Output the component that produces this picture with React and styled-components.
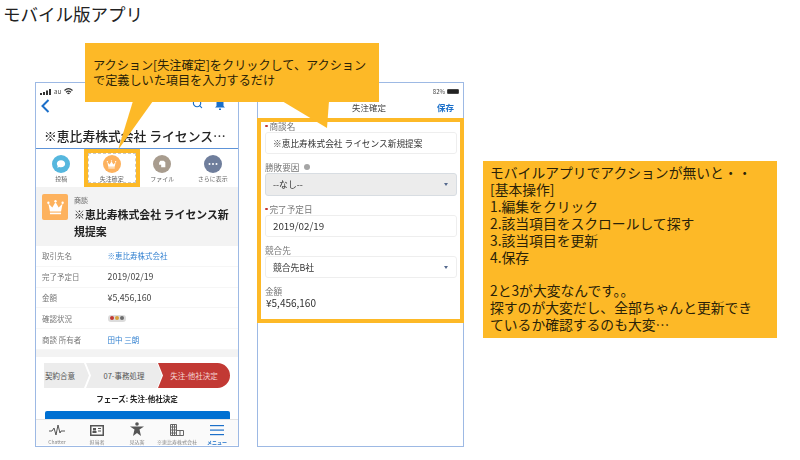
import React from "react";
import styled, { createGlobalStyle } from "styled-components";
import { Search } from "lucide-react";

const rows = [
  { label: "取引先名", value: "※恵比寿株式会社", link: true },
  { label: "完了予定日", value: "2019/02/19", num: true },
  { label: "金額", value: "¥5,456,160", num: true },
  { label: "確認状況", lights: true },
  { label: "商談 所有者", value: "田中 三朗", link: true },
];

const Crown = ({ size }) => (
  <svg width={size} height={size} viewBox="0 0 24 24" fill="#fff">
    <path d="M3 7l5 5 4-7 4 7 5-5-2 10H5z" />
    <circle cx="3" cy="6" r="1.5" />
    <circle cx="12" cy="4" r="1.5" />
    <circle cx="21" cy="6" r="1.5" />
    <rect x="5" y="18.5" width="14" height="2" />
  </svg>
);

const App = () => {
  return (
    <Page>
      <GlobalStyle />
      <Title>モバイル版アプリ</Title>
      <Stage>
        <Phone>
          <StatusBar>
            <svg width="11" height="6" viewBox="0 0 11 6" fill="#333">
              <rect x="0" y="4" width="2" height="2" />
              <rect x="3" y="3" width="2" height="3" />
              <rect x="6" y="1.5" width="2" height="4.5" />
              <rect x="9" y="0" width="2" height="6" />
            </svg>
            <span>au</span>
            <svg width="9" height="7" viewBox="0 0 18 14" fill="none" stroke="#333" strokeWidth="2.4">
              <path d="M1 5c5-4.500 11-4.500 16 0M4 8.500c3-2.500 7-2.500 10 0M7 11.500c1-1 3-1 4 0" />
            </svg>
          </StatusBar>
          <NavBar>
            <svg width="9" height="14" viewBox="0 0 9 14" fill="none" stroke="#1b6fc9" strokeWidth="2">
              <path d="M7.500 1L1.500 7l6 6" />
            </svg>
            <NavIcons>
              <Search size={11} color="#1b6fc9" strokeWidth={2.5} />
              <svg width="12" height="12" viewBox="0 0 12 12" fill="#1b6fc9">
                <path d="M2.500 8V4.500a3.500 3.500 0 0 1 7 0V8l1.500 1.500H1zM5 10.500h2V12H5z" />
              </svg>
            </NavIcons>
          </NavBar>
          <RecordTitle>※恵比寿株式会社 ライセンス…</RecordTitle>
          <Actions>
            <Action>
              <ActionCircle $color="#56b7de">
                <svg width="10" height="10" viewBox="0 0 12 12" fill="#fff">
                  <path d="M6 1.500c3 0 5 1.900 5 4.300S9 10 6 10c-.8 0-1.500-.1-2.200-.4L1.500 10.500l.6-2.100C1.400 7.700 1 6.800 1 5.800 1 3.400 3 1.500 6 1.500z" />
                </svg>
              </ActionCircle>
              <ActionLabel>投稿</ActionLabel>
            </Action>
            <Action $highlight>
              <ActionCircle $color="#fdb25e">
                <Crown size={11} />
              </ActionCircle>
              <ActionLabel>失注確定</ActionLabel>
            </Action>
            <Action>
              <ActionCircle $color="#a89c8e">
                <svg width="10" height="10" viewBox="0 0 12 12" fill="#fff">
                  <path d="M4 2h4l2 2v6H5V7H2.500V4.500z" />
                </svg>
              </ActionCircle>
              <ActionLabel>ファイル</ActionLabel>
            </Action>
            <Action>
              <ActionCircle $color="#6f7e9c">
                <svg width="10" height="4" viewBox="0 0 10 4" fill="#fff">
                  <circle cx="1.500" cy="2" r="1" />
                  <circle cx="5" cy="2" r="1" />
                  <circle cx="8.500" cy="2" r="1" />
                </svg>
              </ActionCircle>
              <ActionLabel>さらに表示</ActionLabel>
            </Action>
          </Actions>
          <RecordHead>
            <RecordIcon>
              <Crown size={19} />
            </RecordIcon>
            <RecordHeadText>
              <RecordType>商談</RecordType>
              <RecordName>※恵比寿株式会社 ライセンス新規提案</RecordName>
            </RecordHeadText>
          </RecordHead>
          <DetailList>
            {rows.map((row) => (
              <DetailRow key={row.label}>
                <DetailLabel>{row.label}</DetailLabel>
                {row.lights ? (
                  <Lights>
                    <Light $color="#c23934" />
                    <Light $color="#d8a13c" />
                    <Light $color="#6c6c6c" />
                  </Lights>
                ) : (
                  <DetailValue $link={row.link} $num={row.num}>
                    {row.value}
                  </DetailValue>
                )}
              </DetailRow>
            ))}
          </DetailList>
          <Band />
          <PathRow>
            <PathStepFirst>契約合意</PathStepFirst>
            <PathStepMiddle>07-事務処理</PathStepMiddle>
            <PathStepLast>失注-他社決定</PathStepLast>
          </PathRow>
          <Phase>フェーズ: 失注-他社決定</Phase>
          <BlueButton />
          <TabBar>
            <Tab>
              <svg width="16" height="12" viewBox="0 0 16 12" fill="none" stroke="#555" strokeWidth="1">
                <path d="M0 7h3l2-3 2 7 2-10 2 8 1-2h4" />
              </svg>
              <TabLabel>Chatter</TabLabel>
            </Tab>
            <Tab>
              <svg width="14" height="11" viewBox="0 0 14 11" fill="#555">
                <path d="M0 0h14v11H0zM1.500 1.500v8h11v-8z" fillRule="evenodd" />
                <rect x="3" y="3" width="3" height="2.500" />
                <rect x="2.500" y="6" width="4" height="2" />
                <rect x="8" y="3" width="3" height="1" />
                <rect x="8" y="5.500" width="3" height="1" />
              </svg>
              <TabLabel>担当者</TabLabel>
            </Tab>
            <Tab>
              <svg width="14" height="14" viewBox="0 0 14 14" fill="#555">
                <circle cx="7" cy="2" r="1.800" />
                <path d="M0 4.500h14l-4.500 3 1.500 6.500-4-3-4 3 1.500-6.500z" />
              </svg>
              <TabLabel>見込客</TabLabel>
            </Tab>
            <Tab>
              <svg width="14" height="12" viewBox="0 0 14 12" fill="none" stroke="#666" strokeWidth="1">
                <path d="M.5.500h6v11h-6zM6.500 6.500h7v5h-7zM2.500.500v11M4.500.500v11M.5 3h6M.5 6h6M.5 9h6M10 6.500v5" />
              </svg>
              <TabLabel>※恵比寿株式会社</TabLabel>
            </Tab>
            <Tab>
              <svg width="14" height="11" viewBox="0 0 14 11" fill="#1b6fc9">
                <rect y="0" width="14" height="1.200" />
                <rect y="4.500" width="14" height="1.200" />
                <rect y="9" width="14" height="1.200" />
              </svg>
              <TabLabel $active>メニュー</TabLabel>
            </Tab>
          </TabBar>
        </Phone>

        <FormPhone>
          <StatusBarRight>
            <span>82%</span>
            <Battery />
          </StatusBarRight>
          <FormNav>
            <FormNavTitle>失注確定</FormNavTitle>
            <SaveLink>保存</SaveLink>
          </FormNav>
          <FormFrame>
            <Field>
              <FieldLabel $required>商談名</FieldLabel>
              <TextInput>※恵比寿株式会社 ライセンス新規提案</TextInput>
            </Field>
            <Field>
              <FieldLabel>
                勝敗要因 <InfoDot />
              </FieldLabel>
              <SelectBox $disabled>
                --なし--
                <Caret />
              </SelectBox>
            </Field>
            <Field>
              <FieldLabel $required>完了予定日</FieldLabel>
              <TextInput $num>2019/02/19</TextInput>
            </Field>
            <Field>
              <FieldLabel>競合先</FieldLabel>
              <SelectBox>
                競合先B社
                <Caret />
              </SelectBox>
            </Field>
            <Field>
              <FieldLabel>金額</FieldLabel>
              <Amount>¥5,456,160</Amount>
            </Field>
          </FormFrame>
        </FormPhone>

        <NotePanel>
          モバイルアプリでアクションが無いと・・
          <br />
          [基本操作]
          <br />
          1.編集をクリック
          <br />
          2.該当項目をスクロールして探す
          <br />
          3.該当項目を更新
          <br />
          4.保存
          <br />
          <br />
          2と3が大変なんです。。
          <br />
          探すのが大変だし、全部ちゃんと更新でき
          <br />
          ているか確認するのも大変…
        </NotePanel>
      </Stage>

      <Callout>
        <CalloutTails width="294" height="108" viewBox="0 0 294 108">
          <path d="M48 58L33 107L68 58z" fill="#fdb927" />
          <path d="M197 58L242 85L244 58z" fill="#fdb927" />
        </CalloutTails>
        <CalloutText>
          アクション[失注確定]をクリックして、アクション
          <br />
          で定義しいた項目を入力するだけ
        </CalloutText>
      </Callout>
    </Page>
  );
};

export default App;

const GlobalStyle = createGlobalStyle`
body {
  margin: 0;
  background: white;
  font-family: "Noto Sans CJK JP", "Noto Sans", sans-serif;
}
`;
const Page = styled.div`
position: relative;
width: 800px;
height: 460px;
overflow: hidden;
background: white;
color: #222;
`;
const Title = styled.div`
height: 82px;
padding: 1px 0 0 3px;
box-sizing: border-box;
font-size: 17.5px;
line-height: 26px;
color: #222;
`;
const Stage = styled.div`
display: flex;
align-items: flex-start;
padding-left: 35px;
`;
const Phone = styled.div`
width: 204px;
height: 365px;
box-sizing: border-box;
border: 1px solid #9db9e4;
display: flex;
flex-direction: column;
overflow: hidden;
filter: blur(0.3px);
`;
const StatusBar = styled.div`
height: 17px;
flex: none;
display: flex;
align-items: center;
gap: 3px;
padding-left: 4px;
font-size: 6px;
color: #444;
`;
const NavBar = styled.div`
height: 12px;
flex: none;
display: flex;
align-items: center;
justify-content: space-between;
padding: 0 12px 0 5px;
`;
const NavIcons = styled.div`
display: flex;
align-items: center;
gap: 11px;
margin-bottom: 5px;
`;
const RecordTitle = styled.div`
height: 37px;
flex: none;
box-sizing: border-box;
padding: 12px 0 0 8px;
border-bottom: 1px solid #5d93d8;
font-size: 12.800px;
line-height: 24px;
font-weight: 500;
color: #222;
white-space: nowrap;
`;
const Actions = styled.div`
height: 38px;
flex: none;
display: grid;
grid-template-columns: repeat(4, 1fr);
`;
const Action = styled.div`
position: relative;
display: flex;
flex-direction: column;
align-items: center;
padding-top: 6px;
gap: 1px;
${(p) =>
  p.$highlight &&
  `
  margin: 0 -3px;
  box-shadow: inset 0 0 0 4px #fdb927;
  &::after {
    content: "";
    position: absolute;
    inset: 4px;
    border: 1px dashed #c8c8c8;
  }
`}
`;
const ActionCircle = styled.div`
width: 18px;
height: 18px;
border-radius: 50%;
flex: none;
display: flex;
align-items: center;
justify-content: center;
background: ${(p) => p.$color};
`;
const ActionLabel = styled.div`
font-size: 6px;
line-height: 10px;
color: #666;
white-space: nowrap;
`;
const RecordHead = styled.div`
height: 59px;
flex: none;
box-sizing: border-box;
background: #f3f3f3;
display: flex;
gap: 6px;
padding: 7px 6px 0 6px;
`;
const RecordIcon = styled.div`
width: 26px;
height: 26px;
flex: none;
border-radius: 2px;
background: #fdb25e;
display: flex;
align-items: center;
justify-content: center;
`;
const RecordHeadText = styled.div`
display: flex;
flex-direction: column;
`;
const RecordType = styled.div`
font-size: 7px;
line-height: 12px;
color: #666;
`;
const RecordName = styled.div`
font-size: 10.900px;
line-height: 17px;
font-weight: 700;
color: #222;
`;
const DetailList = styled.div`
height: 104px;
flex: none;
display: grid;
grid-auto-rows: 1fr;
`;
const DetailRow = styled.div`
display: flex;
align-items: center;
padding-left: 6px;
border-bottom: 1px solid #f6f6f6;
`;
const DetailLabel = styled.div`
width: 65.500px;
font-size: 7.500px;
color: #777;
`;
const DetailValue = styled.div`
font-size: ${(p) => (p.$num ? "8.800px" : "7.500px")};
color: ${(p) => (p.$link ? "#2f7fd0" : "#444")};
`;
const Lights = styled.div`
display: flex;
gap: 1px;
padding: 1.500px 2px;
border-radius: 3px;
background: #dcdcdc;
`;
const Light = styled.div`
width: 4px;
height: 4px;
border-radius: 50%;
background: ${(p) => p.$color};
`;
const Band = styled.div`
height: 7px;
flex: none;
background: #f3f3f3;
`;
const PathRow = styled.div`
height: 25px;
flex: none;
display: flex;
margin: 6px 0 0 8px;
`;
const PathStep = styled.div`
display: flex;
align-items: center;
justify-content: center;
flex: none;
font-size: 7.500px;
color: #555;
background: #ececec;
white-space: nowrap;
`;
const PathStepFirst = styled(PathStep)`
width: 45px;
justify-content: flex-start;
padding-left: 1px;
box-sizing: border-box;
clip-path: polygon(0 0, 40px 0, 45px 50%, 40px 100%, 0 100%);
`;
const PathStepMiddle = styled(PathStep)`
width: 76px;
margin-left: -3px;
clip-path: polygon(0 0, 71px 0, 76px 50%, 71px 100%, 0 100%, 5px 50%);
`;
const PathStepLast = styled(PathStep)`
width: 72px;
margin-left: -4px;
color: #f4d4d2;
background: #c23934;
clip-path: path("M0 0H59.500A12.500 12.500 0 0 1 59.500 25H0L5 12.500Z");
`;
const Phase = styled.div`
height: 23px;
flex: none;
text-align: center;
font-size: 7.500px;
line-height: 22px;
font-weight: 700;
color: #222;
`;
const BlueButton = styled.div`
height: 8px;
flex: none;
margin: 0 8px 0 9px;
border-radius: 2px 2px 0 0;
background: #0070d2;
`;
const TabBar = styled.div`
height: 26px;
flex: none;
box-sizing: border-box;
display: grid;
grid-template-columns: repeat(5, 1fr);
border-top: 1px solid #e4e4e4;
background: #fafafa;
padding: 0 1px;
`;
const Tab = styled.div`
display: flex;
flex-direction: column;
align-items: center;
justify-content: flex-end;
gap: 2px;
`;
const TabLabel = styled.div`
font-size: 5px;
line-height: 7px;
white-space: nowrap;
color: ${(p) => (p.$active ? "#1b6fc9" : "#888")};
font-weight: ${(p) => (p.$active ? 700 : 400)};
`;
const FormPhone = styled.div`
width: 207px;
height: 365px;
margin-left: 18px;
box-sizing: border-box;
border: 1px solid #9db9e4;
display: flex;
flex-direction: column;
filter: blur(0.3px);
`;
const StatusBarRight = styled.div`
height: 17px;
flex: none;
display: flex;
align-items: center;
justify-content: flex-end;
gap: 2px;
padding-right: 4px;
font-size: 6px;
color: #444;
`;
const Battery = styled.div`
width: 12px;
height: 5px;
box-sizing: border-box;
border: 1px solid #444;
border-radius: 1px;
background: #222;
`;
const FormNav = styled.div`
position: relative;
height: 18px;
flex: none;
box-sizing: border-box;
padding-bottom: 4px;
display: flex;
align-items: center;
justify-content: flex-end;
`;
const FormNavTitle = styled.div`
position: absolute;
left: 17px;
right: 0;
text-align: center;
font-size: 8.500px;
color: #444;
`;
const SaveLink = styled.div`
padding-right: 9px;
font-size: 8.500px;
font-weight: 700;
color: #1b6fc9;
`;
const FormFrame = styled.div`
height: 205px;
flex: none;
box-sizing: border-box;
margin: 0 -1px;
border: 4px solid #fdb927;
padding: 0 3px 0 4px;
display: flex;
flex-direction: column;
gap: 9px;
`;
const Field = styled.div`
display: flex;
flex-direction: column;
gap: 2px;
`;
const FieldLabel = styled.div`
height: 8px;
display: flex;
align-items: center;
gap: 5px;
font-size: 8.600px;
line-height: 8px;
white-space: nowrap;
color: #777;
${(p) =>
  p.$required &&
  `
  &::before {
    content: "";
    width: 2.500px;
    height: 2.500px;
    border-radius: 50%;
    background: #c23934;
    margin-right: -3px;
  }
`}
`;
const InfoDot = styled.span`
width: 6px;
height: 6px;
border-radius: 50%;
background: #a5a5a5;
`;
const TextInput = styled.div`
height: 22px;
box-sizing: border-box;
border: 1px solid #eeeeee;
border-radius: 3px;
padding-left: 7px;
display: flex;
align-items: center;
font-size: ${(p) => (p.$num ? "9.800px" : "8.700px")};
color: #333;
white-space: nowrap;
`;
const SelectBox = styled.div`
height: ${(p) => (p.$disabled ? "23px" : "22px")};
box-sizing: border-box;
border: 1px solid ${(p) => (p.$disabled ? "#d8dde2" : "#eeeeee")};
border-radius: 3px;
padding: 0 8px 0 7px;
display: flex;
align-items: center;
justify-content: space-between;
font-size: 8.800px;
color: #333;
background: ${(p) => (p.$disabled ? "#ececec" : "white")};
`;
const Caret = styled.span`
width: 0;
height: 0;
border-left: 2.500px solid transparent;
border-right: 2.500px solid transparent;
border-top: 3px solid #54698d;
`;
const Amount = styled.div`
font-size: 10px;
line-height: 12px;
padding-left: 1px;
color: #333;
`;
const NotePanel = styled.div`
width: 294px;
height: 177px;
margin: 79px 0 0 19px;
box-sizing: border-box;
padding: 3px 0 0 7px;
background: #fdb927;
font-size: 13.800px;
line-height: 16.900px;
color: #2a2208;
white-space: nowrap;
`;
const Callout = styled.div`
position: absolute;
left: 85px;
top: 43px;
width: 294px;
height: 59px;
box-sizing: border-box;
padding: 14px 0 0 8px;
background: #fdb927;
`;
const CalloutText = styled.div`
position: relative;
font-size: 12.150px;
line-height: 15px;
color: #2a2208;
white-space: nowrap;
`;
const CalloutTails = styled.svg`
position: absolute;
left: 0;
top: 0;
`;
